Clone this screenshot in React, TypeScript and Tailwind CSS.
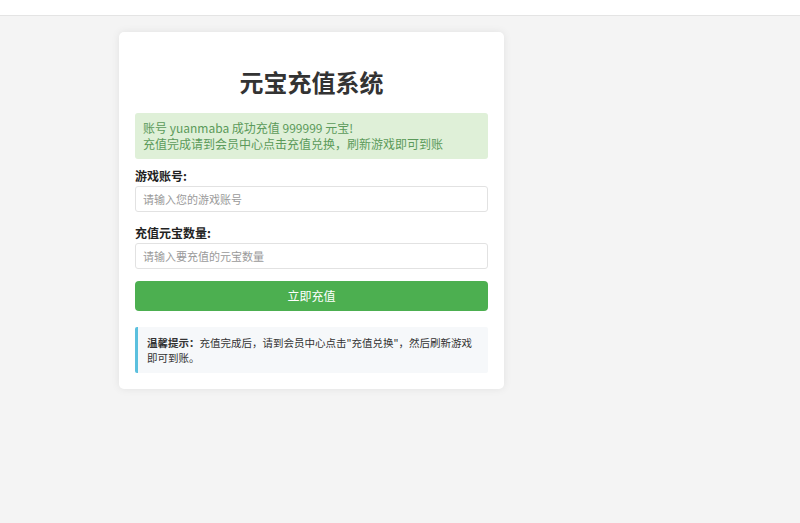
export default function App() {
  const font = { fontFamily: '"Microsoft YaHei", "Noto Sans CJK SC", "Liberation Sans", sans-serif' };
  const inp =
    "w-full h-[26px] border border-[#e2e2e2] rounded-[3px] px-[7px] text-[11px] text-[#333] placeholder:text-[#9a9a9a] focus:outline-none bg-white";

  return (
    <div className="min-h-[523px] bg-[#f4f4f4]" style={font}>
      <div className="h-4 bg-white border-b border-[#e4e4e4]" />
      <div className="pl-[119px] pt-4">
        <div className="w-[385px] bg-white rounded-[5px] shadow-[0_0_8px_rgba(0,0,0,0.08)] px-4 pt-[34px] pb-4">
          <h1 className="text-center text-[24px] font-bold text-[#333] leading-[32px] mb-[15px]">元宝充值系统</h1>

          <div className="bg-[#dff0d8] text-[#5b9a5a] rounded-[3px] px-2 py-[7px] text-[12px] leading-[16px]">
            <p>账号 yuanmaba 成功充值 999999 元宝!</p>
            <p>充值完成请到会员中心点击充值兑换，刷新游戏即可到账</p>
          </div>

          <form className="mt-[8px]">
            <label className="block text-[12px] font-bold text-[#222] leading-[18px]">游戏账号:</label>
            <input className={inp} placeholder="请输入您的游戏账号" />

            <label className="block text-[12px] font-bold text-[#222] leading-[18px] mt-[12px]">充值元宝数量:</label>
            <input className={inp} placeholder="请输入要充值的元宝数量" />

            <button
              type="button"
              className="w-full h-[30px] mt-[12px] bg-[#4caf50] text-white text-[12px] rounded-[4px]"
            >
              立即充值
            </button>
          </form>

          <div className="mt-[16px] bg-[#f6f8fa] border-l-[3px] border-[#5bc0de] rounded-[2px] pl-[9px] pr-2 py-[8px] text-[10.5px] leading-[15px] text-[#333]">
            <span className="font-bold">温馨提示：</span>
            <span>充值完成后，请到会员中心点击"充值兑换"，然后刷新游戏即可到账。</span>
          </div>
        </div>
      </div>
    </div>
  );
}
